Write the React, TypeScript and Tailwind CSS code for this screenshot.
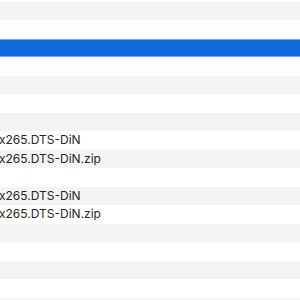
import React from "react";

const rows: { text?: string; selected?: boolean }[] = [
  {}, {}, {}, { selected: true }, {}, {}, {}, {}, { text: "x265.DTS-DiN" }, { text: "x265.DTS-DiN.zip" },
  {}, { text: "x265.DTS-DiN" }, { text: "x265.DTS-DiN.zip" }, {}, {}, {}, {}, {}, {},
];

export default function App() {
  return (
    <div className="w-[300px] h-[300px] overflow-hidden bg-white" style={{ fontFamily: 'Inter, "Liberation Sans", Arial, sans-serif' }}>
      <div className="-mt-[17px] flex flex-col">
        {rows.map((r, i) => (
          <div
            key={i}
            className={
              r.selected
                ? "h-[18.5px] bg-[#1169dd] border-y border-[#6fa6ee] flex items-center"
                : i % 2 === 0
                ? "h-[18.5px] bg-white flex items-center"
                : "h-[18.5px] bg-[#f3f4f4] flex items-center"
            }
          >
            {r.text && (
              <span className="-ml-[1px] text-[12px] leading-none text-[#262626] whitespace-nowrap">{r.text}</span>
            )}
          </div>
        ))}
      </div>
    </div>
  );
}
